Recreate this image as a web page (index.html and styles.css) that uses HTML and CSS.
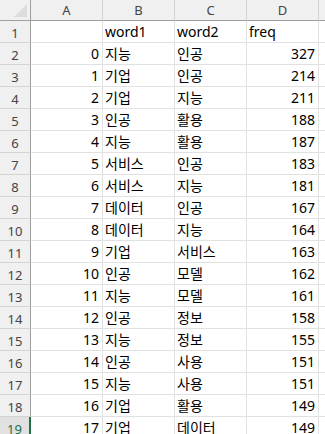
FILE: index.html
```html
<!DOCTYPE html>
<html lang="ko">
<head>
<meta charset="utf-8">
<link rel="stylesheet" href="styles.css">
</head>
<body>
<div class="sheet">
  <div class="corner"><span class="tri"></span></div>
  <div class="colhead">A</div>
  <div class="colhead">B</div>
  <div class="colhead">C</div>
  <div class="colhead">D</div>
  <div class="filler head"></div>

  <div class="rowhead">1</div><div class="cell"></div><div class="cell">word1</div><div class="cell">word2</div><div class="cell">freq</div><div class="filler"></div>
  <div class="rowhead">2</div><div class="cell num">0</div><div class="cell">지능</div><div class="cell">인공</div><div class="cell num">327</div><div class="filler"></div>
  <div class="rowhead">3</div><div class="cell num">1</div><div class="cell">기업</div><div class="cell">인공</div><div class="cell num">214</div><div class="filler"></div>
  <div class="rowhead">4</div><div class="cell num">2</div><div class="cell">기업</div><div class="cell">지능</div><div class="cell num">211</div><div class="filler"></div>
  <div class="rowhead">5</div><div class="cell num">3</div><div class="cell">인공</div><div class="cell">활용</div><div class="cell num">188</div><div class="filler"></div>
  <div class="rowhead">6</div><div class="cell num">4</div><div class="cell">지능</div><div class="cell">활용</div><div class="cell num">187</div><div class="filler"></div>
  <div class="rowhead">7</div><div class="cell num">5</div><div class="cell">서비스</div><div class="cell">인공</div><div class="cell num">183</div><div class="filler"></div>
  <div class="rowhead">8</div><div class="cell num">6</div><div class="cell">서비스</div><div class="cell">지능</div><div class="cell num">181</div><div class="filler"></div>
  <div class="rowhead">9</div><div class="cell num">7</div><div class="cell">데이터</div><div class="cell">인공</div><div class="cell num">167</div><div class="filler"></div>
  <div class="rowhead">10</div><div class="cell num">8</div><div class="cell">데이터</div><div class="cell">지능</div><div class="cell num">164</div><div class="filler"></div>
  <div class="rowhead">11</div><div class="cell num">9</div><div class="cell">기업</div><div class="cell">서비스</div><div class="cell num">163</div><div class="filler"></div>
  <div class="rowhead">12</div><div class="cell num">10</div><div class="cell">인공</div><div class="cell">모델</div><div class="cell num">162</div><div class="filler"></div>
  <div class="rowhead">13</div><div class="cell num">11</div><div class="cell">지능</div><div class="cell">모델</div><div class="cell num">161</div><div class="filler"></div>
  <div class="rowhead">14</div><div class="cell num">12</div><div class="cell">인공</div><div class="cell">정보</div><div class="cell num">158</div><div class="filler"></div>
  <div class="rowhead">15</div><div class="cell num">13</div><div class="cell">지능</div><div class="cell">정보</div><div class="cell num">155</div><div class="filler"></div>
  <div class="rowhead">16</div><div class="cell num">14</div><div class="cell">인공</div><div class="cell">사용</div><div class="cell num">151</div><div class="filler"></div>
  <div class="rowhead">17</div><div class="cell num">15</div><div class="cell">지능</div><div class="cell">사용</div><div class="cell num">151</div><div class="filler"></div>
  <div class="rowhead">18</div><div class="cell num">16</div><div class="cell">기업</div><div class="cell">활용</div><div class="cell num">149</div><div class="filler"></div>
  <div class="rowhead active">19</div><div class="cell num">17</div><div class="cell">기업</div><div class="cell">데이터</div><div class="cell num">149</div><div class="filler"></div>
</div>
</body>
</html>
```

FILE: styles.css
```css
html, body {
  margin: 0;
  padding: 0;
  background: #ffffff;
  overflow: hidden;
}

.sheet {
  display: grid;
  grid-template-columns: 31px 72px 72px 72px 72px 1fr;
  grid-template-rows: 21px repeat(19, 22px);
  width: 325px;
  font-family: "Noto Sans", "Noto Sans CJK KR", sans-serif;
  font-size: 14px;
  color: #000;
}

.sheet > div {
  box-sizing: border-box;
  border-right: 1px solid #e1e1e1;
  border-bottom: 1px solid #e1e1e1;
  white-space: nowrap;
  overflow: hidden;
}

.corner {
  background: #f0f0f0;
  position: relative;
  border-right-color: #9f9f9f !important;
  border-bottom-color: #9f9f9f !important;
}

.tri {
  position: absolute;
  right: 3px;
  bottom: 3px;
  width: 0;
  height: 0;
  border-left: 13px solid transparent;
  border-bottom: 13px solid #dcdcdc;
}

.colhead {
  background: #f0f0f0;
  border-right-color: #d4d4d4 !important;
  border-bottom-color: #9f9f9f !important;
  color: #444;
  font-size: 13px;
  display: flex;
  align-items: center;
  justify-content: center;
}

.filler.head {
  background: #f0f0f0;
  border-bottom-color: #9f9f9f !important;
  border-right: none !important;
}

.rowhead {
  background: #f0f0f0;
  border-right-color: #9f9f9f !important;
  border-bottom-color: #d4d4d4 !important;
  color: #444;
  font-size: 13px;
  display: flex;
  align-items: center;
  justify-content: center;
  padding-top: 2px;
}

.rowhead.active {
  background: #e1e1e1;
  color: #217346;
  border-right: 2px solid #217346 !important;
}

.cell {
  display: flex;
  align-items: flex-end;
  padding: 0 3px 1px 2px;
  line-height: 19px;
}

.cell.num {
  justify-content: flex-end;
}

.filler {
  border-right: none !important;
}
```
